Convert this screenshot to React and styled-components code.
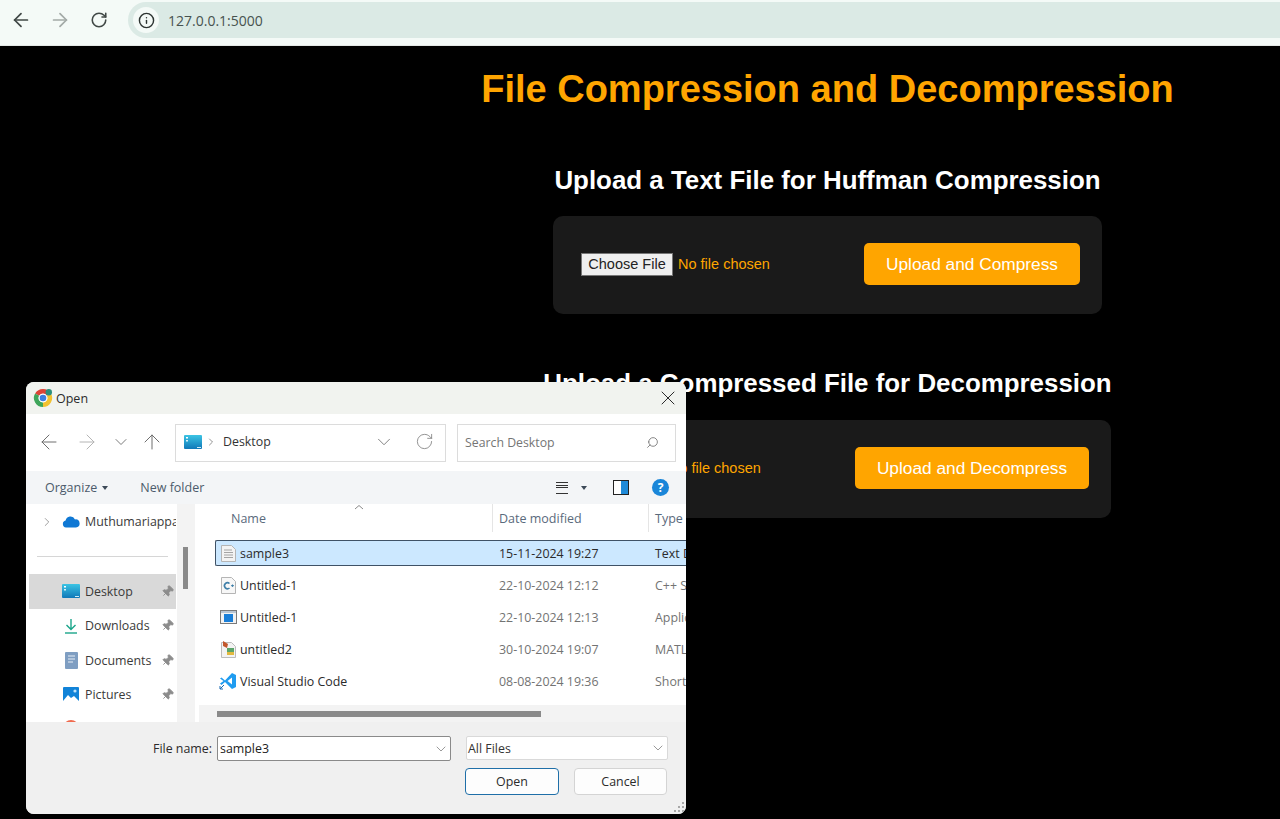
import React from 'react';
import styled, { createGlobalStyle } from 'styled-components';
import { ArrowLeft, ArrowRight, ArrowUp, ChevronDown, ChevronRight, Info, Pin, RotateCw, Search, X } from 'lucide-react';

const GlobalStyle = createGlobalStyle`
    html, body {
        margin: 0;
        padding: 0;
        background: #000;
    }
    body {
        font-family: "Liberation Sans", Arial, sans-serif;
    }
`;

const Page = styled.div`
    position: relative;
    width: 1280px;
    height: 819px;
    overflow: hidden;
    background: #000;
`;

/* browser chrome */
const BrowserBar = styled.div`
    height: 45px;
    display: flex;
    align-items: flex-start;
    background: #f4faf7;
    border-bottom: 1px solid #e3e8e5;
    box-sizing: content-box;
`;

const BrowserButton = styled.div`
    width: 39px;
    height: 40px;
    display: flex;
    align-items: center;
    justify-content: center;
    color: ${(p) => (p.$off ? '#a3aaa7' : '#404846')};
    &:first-child {
        margin-left: 1px;
    }
`;

const AddressBar = styled.div`
    margin-left: 10px;
    margin-top: 2px;
    flex: 1;
    height: 36px;
    display: flex;
    align-items: center;
    padding-left: 5px;
    gap: 9px;
    background: #dbeae5;
    border-radius: 18px 0 0 18px;
`;

const SiteInfo = styled.div`
    width: 26px;
    height: 26px;
    border-radius: 50%;
    background: #f4faf7;
    display: flex;
    align-items: center;
    justify-content: center;
    color: #2c3331;
`;

const Url = styled.span`
    font-family: "Open Sans", sans-serif;
    font-size: 14px;
    color: #47524f;
`;

/* the page itself */
const Main = styled.main`
    display: flex;
    flex-direction: column;
    align-items: center;
    padding: 22px 0 0 375px;
`;

const Title = styled.h1`
    margin: 0;
    font-size: 38px;
    line-height: 42px;
    font-weight: bold;
    color: #ffa500;
`;

const Section = styled.section`
    margin-top: ${(p) => p.$top}px;
    display: flex;
    flex-direction: column;
    align-items: center;
    gap: ${(p) => p.$gap}px;
`;

const Heading = styled.h2`
    margin: 0;
    font-size: 25.9px;
    line-height: 32px;
    font-weight: bold;
    color: #fff;
`;

const Card = styled.form`
    height: 98px;
    margin: 0;
    box-sizing: border-box;
    display: inline-flex;
    align-items: center;
    padding: 0 22px 2px 28px;
    background: #1a1a1a;
    border-radius: 10px;
`;

const FilePicker = styled.div`
    width: 283px;
    display: flex;
    align-items: center;
    gap: 5px;
    font-size: 14.5px;
    color: #ffa500;
`;

const ChooseButton = styled.span`
    width: 92px;
    height: 23px;
    box-sizing: border-box;
    display: flex;
    align-items: center;
    justify-content: center;
    background: #efefef;
    border: 1px solid #767676;
    color: #222;
`;

const SubmitButton = styled.span`
    height: 42px;
    padding: 0 22px;
    display: flex;
    align-items: center;
    background: #ffa500;
    border-radius: 5px;
    font-size: 17.3px;
    color: #fff;
`;

/* the native file dialog, floating above the page */
const Dialog = styled.div`
    position: absolute;
    left: 26px;
    top: 382px;
    width: 660px;
    height: 432px;
    display: flex;
    flex-direction: column;
    overflow: hidden;
    border-radius: 8px;
    background: #f0f0f0;
    font-family: "Open Sans", "Noto Sans", sans-serif;
    font-size: 12.4px;
    color: #2b2b2b;
`;

const TitleBar = styled.div`
    height: 32px;
    flex: none;
    display: flex;
    align-items: center;
    padding: 0 6px 0 7px;
    gap: 3px;
    background: #f1f3ef;
    font-size: 12.5px;
`;

const TitleText = styled.span`
    flex: 1;
`;

const NavRow = styled.div`
    height: 57px;
    flex: none;
    display: flex;
    align-items: center;
    padding-left: 4px;
    background: #fff;
`;

const NavButton = styled.div`
    width: ${(p) => p.$w}px;
    margin-top: -2px;
    display: flex;
    justify-content: center;
    color: ${(p) => (p.$off ? '#b4b4b4' : '#6e6e6e')};
`;

const PathBox = styled.div`
    margin-left: 7px;
    width: 271px;
    height: 38px;
    box-sizing: border-box;
    display: flex;
    align-items: center;
    padding: 0 0 2px 8px;
    gap: 3px;
    border: 1px solid #dcdcdc;
    color: #333;
`;

const PathText = styled.span`
    flex: 1;
    margin-left: 3px;
`;

const PathAction = styled.div`
    width: 41px;
    margin-left: -3px;
    display: flex;
    justify-content: center;
    color: #777;
`;

const SearchBox = styled.div`
    margin-left: 11px;
    width: 219px;
    height: 38px;
    box-sizing: border-box;
    display: flex;
    align-items: center;
    justify-content: space-between;
    padding: 0 16px 0 7px;
    border: 1px solid #dcdcdc;
    font-size: 12.3px;
    color: #757575;
`;

const ToolBar = styled.div`
    height: 33px;
    flex: none;
    display: flex;
    align-items: center;
    padding-left: 19px;
    background: #f3f5f7;
    font-size: 12.5px;
    color: #4c5b6b;
`;

const ToolLabel = styled.span`
    display: flex;
    align-items: center;
    gap: 5px;
    margin-right: ${(p) => p.$after || 0}px;
`;

const Caret = styled.i`
    width: 0;
    height: 0;
    border-left: 3.5px solid transparent;
    border-right: 3.5px solid transparent;
    border-top: 4px solid #3d4a58;
`;

const ToolIcons = styled.div`
    margin-left: auto;
    margin-right: 17px;
    display: flex;
    align-items: center;
`;

const ListLines = styled.div`
    width: 12px;
    height: 10px;
    border-top: 1px solid #333;
    border-bottom: 1px solid #333;
    margin-right: 13px;
    position: relative;
    &::after {
        content: '';
        position: absolute;
        left: 0;
        right: 0;
        top: 2px;
        height: 3px;
        border-top: 1px solid #333;
        border-bottom: 1px solid #333;
        box-sizing: border-box;
    }
`;

const PreviewPane = styled.div`
    width: 14px;
    height: 13px;
    margin: 0 23px 0 26px;
    border: 1px solid #222;
    background: linear-gradient(90deg, #fff 50%, #1f8ad8 50%);
`;

const HelpBadge = styled.div`
    width: 17px;
    height: 17px;
    border-radius: 50%;
    display: flex;
    align-items: center;
    justify-content: center;
    background: #1a86d9;
    color: #fff;
    font-size: 12px;
    font-weight: bold;
`;

const Body = styled.div`
    height: 218px;
    flex: none;
    display: flex;
    background: #fff;
`;

const Sidebar = styled.nav`
    width: 151px;
    flex: none;
    overflow: hidden;
    background: #fff;
    color: #3a3a3a;
`;

const SideItem = styled.div`
    height: ${(p) => p.$h || 34.5}px;
    margin: 0 1px 0 3px;
    display: flex;
    align-items: center;
    background: ${(p) => (p.$active ? '#d9d9d9' : 'transparent')};
`;

const SideChevron = styled.div`
    width: 32px;
    padding-left: 11px;
    box-sizing: border-box;
    display: flex;
    color: #777;
`;

const SideIcon = styled.div`
    width: 20px;
    margin-right: 4px;
    display: flex;
    justify-content: center;
`;

const SideLabel = styled.span`
    flex: 1;
    min-width: 0;
    white-space: nowrap;
    overflow: hidden;
`;

const PinMark = styled.div`
    width: 18px;
    display: flex;
    justify-content: center;
    color: #8c8c8c;
    svg {
        transform: rotate(45deg);
    }
`;

const SideDivider = styled.div`
    margin: 17px 9px 17px 11px;
    height: 1px;
    background: #d6d6d6;
`;

const SideRail = styled.div`
    width: 18px;
    flex: none;
    background: #f3f3f3;
    padding: 43px 0 0 6px;
    box-sizing: border-box;
`;

const RailThumb = styled.div`
    width: 5px;
    height: 42px;
    background: #8a8a8a;
`;

const FilePanel = styled.div`
    flex: 1;
    min-width: 0;
    display: flex;
    flex-direction: column;
`;

const FileArea = styled.div`
    flex: 1;
    min-height: 0;
`;

const HeaderRow = styled.div`
    height: 30px;
    display: grid;
    grid-template-columns: 298px 156px 1fr;
    padding-bottom: 2px;
    box-sizing: border-box;
    font-size: 12.5px;
    color: #5a6a7c;
`;

const HeaderCell = styled.div`
    position: relative;
    display: flex;
    align-items: center;
    padding-left: ${(p) => p.$pad}px;
    border-right: ${(p) => (p.$last ? 'none' : '1px solid #e5e5e5')};
`;

const SortMark = styled.svg`
    position: absolute;
    left: 159px;
    top: 0;
`;

const FileList = styled.div`
    margin: 6px 0 0 20px;
    display: flex;
    flex-direction: column;
    gap: 6px;
`;

const FileRow = styled.div`
    height: 26px;
    box-sizing: border-box;
    display: grid;
    grid-template-columns: 283px 156px 1fr;
    align-items: center;
    white-space: nowrap;
    overflow: hidden;
    background: ${(p) => (p.$selected ? '#cce8ff' : 'transparent')};
    border: 1px solid ${(p) => (p.$selected ? '#3f5266' : 'transparent')};
    border-right: none;
    border-radius: 2px 0 0 2px;
    color: ${(p) => (p.$selected ? '#2b2b2b' : '#737373')};
`;

const NameCell = styled.div`
    display: flex;
    align-items: center;
    color: #2b2b2b;
    margin-left: 4px;
`;

const FileIconSlot = styled.div`
    width: 16px;
    margin-right: 4px;
    display: flex;
    justify-content: center;
    svg {
        flex: none;
    }
`;

const HorizontalTrack = styled.div`
    height: 17px;
    flex: none;
    margin-left: 4px;
    padding: 6px 0 0 18px;
    box-sizing: border-box;
    background: #f3f3f3;
`;

const HorizontalThumb = styled.div`
    width: 324px;
    height: 6px;
    background: #8a8a8a;
`;

const Footer = styled.div`
    position: relative;
    flex: 1;
    padding: 14px 18px 0 0;
    display: flex;
    flex-direction: column;
    align-items: flex-end;
    background: #f0f0f0;
`;

const FooterRow = styled.div`
    display: flex;
    align-items: flex-start;
    gap: ${(p) => p.$gap}px;
    margin-top: ${(p) => p.$top || 0}px;
    margin-right: ${(p) => p.$right || 0}px;
`;

const FieldLabel = styled.span`
    line-height: 25px;
    margin-right: -10px;
`;

const Field = styled.div`
    width: ${(p) => p.$w}px;
    height: ${(p) => p.$h}px;
    box-sizing: border-box;
    display: flex;
    align-items: center;
    justify-content: space-between;
    padding: 0 1px 0 ${(p) => (p.$strong ? 2 : 1)}px;
    background: #fff;
    border: 1px solid ${(p) => (p.$strong ? '#8a8a8a' : '#d9d9d9')};
    border-radius: 2px;
    color: ${(p) => (p.$strong ? '#222' : '#333')};
`;

const DialogButton = styled.div`
    width: ${(p) => p.$w}px;
    height: 27px;
    box-sizing: border-box;
    display: flex;
    align-items: center;
    justify-content: center;
    background: #fdfdfd;
    border: 1px solid ${(p) => (p.$primary ? '#1f6fa8' : '#d4d4d4')};
    border-radius: 4px;
`;

const Grip = styled.svg`
    position: absolute;
    right: 1px;
    bottom: 1px;
`;

/* drawings */
const ChromeLogo = () => (
    <svg width="20" height="20" viewBox="0 0 20 20" fill="none" strokeWidth="4.6">
        <path d="M4.100 6.600a6.800 6.800 0 0 1 11.800 0" stroke="#dc4437" />
        <path d="M15.900 6.600A6.800 6.800 0 0 1 10 16.800" stroke="#f2c230" />
        <path d="M10 16.800A6.800 6.800 0 0 1 4.100 6.600" stroke="#3ea55a" />
        <circle cx="10" cy="10" r="4.300" fill="#fff" stroke="none" />
        <circle cx="10" cy="10" r="3.300" fill="#3d7fe0" stroke="none" />
        <circle cx="15.800" cy="4.200" r="3.200" fill="#2c8f7b" stroke="none" />
    </svg>
);

const DesktopIcon = () => (
    <svg width="18" height="14" viewBox="0 0 18 14">
        <defs>
            <linearGradient id="desk" x1="0" y1="0" x2="0" y2="1">
                <stop offset="0" stopColor="#3cc4e4" />
                <stop offset="1" stopColor="#0f78b8" />
            </linearGradient>
        </defs>
        <rect width="18" height="14" rx="1" fill="url(#desk)" />
        <rect x="2" y="2" width="2" height="1.5" fill="#fff" />
        <rect x="2" y="5" width="2" height="1.5" fill="#d8f2fa" />
        <rect x="13" y="12" width="4" height="1" fill="#cfe9f5" />
    </svg>
);

const CloudIcon = () => (
    <svg width="18" height="13" viewBox="0 0 18 13">
        <path d="M4 12.500A3.500 3.500 0 0 1 3.600 5.600 5 5 0 0 1 13 4.400a4 4 0 0 1 1 8.100z" fill="#0f78d4" />
    </svg>
);

const DownloadIcon = () => (
    <svg width="14" height="16" viewBox="0 0 14 16" fill="none" stroke="#1aa58a" strokeWidth="1.4">
        <path d="M7 1v10M2.500 7L7 11.500 11.500 7" />
        <path d="M1 15h12" />
    </svg>
);

const DocumentsIcon = () => (
    <svg width="13" height="17" viewBox="0 0 13 17">
        <rect width="13" height="17" rx="1" fill="#7f9ec2" />
        <path d="M3 4h7M3 7h7M3 10h5" stroke="#e8eef6" strokeWidth="1" />
    </svg>
);

const PicturesIcon = () => (
    <svg width="16" height="16" viewBox="0 0 16 16">
        <rect width="16" height="16" rx="1" fill="#1183d8" />
        <path d="M0 14l5-6 3 3 3-2 5 5v2H0z" fill="#fff" />
        <circle cx="12" cy="4" r="1.600" fill="#bfe3fa" />
    </svg>
);

const MusicIcon = () => (
    <svg width="16" height="16" viewBox="0 0 16 16">
        <circle cx="8" cy="8" r="8" fill="#ef6a4e" />
    </svg>
);

const TextFileIcon = () => (
    <svg width="15" height="17" viewBox="0 0 15 17">
        <path d="M.5.5h10l4 4v12H.5z" fill="#f3f3f3" stroke="#b5b5b5" />
        <path d="M3 5h8M3 7.500h9M3 10h9M3 12.500h9" stroke="#a4a4a4" />
    </svg>
);

const CppFileIcon = () => (
    <svg width="15" height="17" viewBox="0 0 15 17">
        <path d="M.5.5h10l4 4v12H.5z" fill="#f7f7f7" stroke="#b5b5b5" />
        <path d="M8.500 6.500a3 3 0 1 0 0 4.500" fill="none" stroke="#3f7fa8" strokeWidth="1.6" />
        <path d="M10 8.700h3M11.500 7.500v2.400" stroke="#3f7fa8" />
    </svg>
);

const AppFileIcon = () => (
    <svg width="17" height="14" viewBox="0 0 17 14">
        <rect x=".5" y=".5" width="16" height="13" fill="#f2f2f2" stroke="#7a7a7a" />
        <rect x="1" y="1" width="15" height="2" fill="#b9c6d3" />
        <rect x="4" y="4" width="9" height="8" fill="#1a7fd8" />
    </svg>
);

const MatlabFileIcon = () => (
    <svg width="15" height="18" viewBox="0 0 15 18">
        <path d="M.5 2.500h10l4 4v11H.5z" fill="#f3f3f3" stroke="#bcbcbc" />
        <path d="M2 1l5 3-1 4-4-2z" fill="#c2572c" />
        <rect x="6" y="8" width="7" height="4" fill="#5aa469" />
        <rect x="6" y="12" width="7" height="3" fill="#e2b93f" />
    </svg>
);

const VsCodeIcon = () => (
    <svg width="18" height="18" viewBox="0 0 18 18">
        <path d="M13 1l4 2v12l-4 2-7-7-3.500 3L1 11.500 4.500 9 1 6.500 2.500 5.500 6 8.500z" fill="#1f9cf0" />
        <path d="M13 5.500L8.500 9l4.500 3.500z" fill="#fff" />
        <path d="M1 17l4-4M1 17h3M1 17v-3" stroke="#1467b0" strokeWidth="1" fill="none" />
    </svg>
);

const sideItems = [
    { label: 'Desktop', icon: <DesktopIcon />, active: true },
    { label: 'Downloads', icon: <DownloadIcon /> },
    { label: 'Documents', icon: <DocumentsIcon /> },
    { label: 'Pictures', icon: <PicturesIcon /> },
    { label: '', icon: <MusicIcon />, height: 32 },
];

const files = [
    { name: 'sample3', date: '15-11-2024 19:27', type: 'Text Document', icon: <TextFileIcon />, selected: true },
    { name: 'Untitled-1', date: '22-10-2024 12:12', type: 'C++ Source', icon: <CppFileIcon /> },
    { name: 'Untitled-1', date: '22-10-2024 12:13', type: 'Application', icon: <AppFileIcon /> },
    { name: 'untitled2', date: '30-10-2024 19:07', type: 'MATLAB', icon: <MatlabFileIcon /> },
    { name: 'Visual Studio Code', date: '08-08-2024 19:36', type: 'Shortcut', icon: <VsCodeIcon /> },
];

const UploadCard = ({ action }) => (
    <Card>
        <FilePicker>
            <ChooseButton>Choose File</ChooseButton>
            No file chosen
        </FilePicker>
        <SubmitButton>{action}</SubmitButton>
    </Card>
);

const App = () => (
    <Page>
        <GlobalStyle />
        <BrowserBar>
            <BrowserButton><ArrowLeft size={22} strokeWidth={1.9} /></BrowserButton>
            <BrowserButton $off><ArrowRight size={22} strokeWidth={1.9} /></BrowserButton>
            <BrowserButton><RotateCw size={18} strokeWidth={2.1} /></BrowserButton>
            <AddressBar>
                <SiteInfo><Info size={17} strokeWidth={2} /></SiteInfo>
                <Url>127.0.0.1:5000</Url>
            </AddressBar>
        </BrowserBar>

        <Main>
            <Title>File Compression and Decompression</Title>
            <Section $top={54} $gap={20}>
                <Heading>Upload a Text File for Huffman Compression</Heading>
                <UploadCard action="Upload and Compress" />
            </Section>
            <Section $top={53} $gap={21}>
                <Heading>Upload a Compressed File for Decompression</Heading>
                <UploadCard action="Upload and Decompress" />
            </Section>
        </Main>

        <Dialog>
            <TitleBar>
                <ChromeLogo />
                <TitleText>Open</TitleText>
                <X size={24} strokeWidth={1} />
            </TitleBar>
            <NavRow>
                <NavButton $w={38}><ArrowLeft size={24} strokeWidth={1} /></NavButton>
                <NavButton $w={38} $off><ArrowRight size={24} strokeWidth={1} /></NavButton>
                <NavButton $w={30}><ChevronDown size={20} strokeWidth={1.1} /></NavButton>
                <NavButton $w={32}><ArrowUp size={24} strokeWidth={1} /></NavButton>
                <PathBox>
                    <DesktopIcon />
                    <ChevronRight size={12} strokeWidth={1.4} color="#666" />
                    <PathText>Desktop</PathText>
                    <PathAction><ChevronDown size={22} strokeWidth={1} /></PathAction>
                    <PathAction><RotateCw size={19} strokeWidth={1} /></PathAction>
                </PathBox>
                <SearchBox>
                    Search Desktop
                    <Search size={13} strokeWidth={1.6} style={{ transform: 'scaleX(-1)' }} />
                </SearchBox>
            </NavRow>
            <ToolBar>
                <ToolLabel $after={32}>Organize <Caret /></ToolLabel>
                <ToolLabel>New folder</ToolLabel>
                <ToolIcons>
                    <ListLines />
                    <Caret />
                    <PreviewPane />
                    <HelpBadge>?</HelpBadge>
                </ToolIcons>
            </ToolBar>
            <Body>
                <Sidebar>
                    <SideItem $h={35}>
                        <SideChevron><ChevronRight size={14} strokeWidth={1.2} /></SideChevron>
                        <SideIcon><CloudIcon /></SideIcon>
                        <SideLabel>Muthumariappa</SideLabel>
                    </SideItem>
                    <SideDivider />
                    {sideItems.map((item, index) => (
                        <SideItem key={index} $active={item.active} $h={item.height}>
                            <SideChevron />
                            <SideIcon>{item.icon}</SideIcon>
                            <SideLabel>{item.label}</SideLabel>
                            {item.label && <PinMark><Pin size={13} strokeWidth={1.6} fill="#8c8c8c" /></PinMark>}
                        </SideItem>
                    ))}
                </Sidebar>
                <SideRail><RailThumb /></SideRail>
                <FilePanel>
                    <FileArea>
                        <HeaderRow>
                            <HeaderCell $pad={36}>
                                Name
                                <SortMark width="10" height="6" viewBox="0 0 10 6" fill="none" stroke="#8a8a8a">
                                    <path d="M1 5l4-3.500L9 5" />
                                </SortMark>
                            </HeaderCell>
                            <HeaderCell $pad={6}>Date modified</HeaderCell>
                            <HeaderCell $pad={6} $last>Type</HeaderCell>
                        </HeaderRow>
                        <FileList>
                            {files.map((file, index) => (
                                <FileRow key={index} $selected={file.selected}>
                                    <NameCell>
                                        <FileIconSlot>{file.icon}</FileIconSlot>
                                        {file.name}
                                    </NameCell>
                                    <span>{file.date}</span>
                                    <span>{file.type}</span>
                                </FileRow>
                            ))}
                        </FileList>
                    </FileArea>
                    <HorizontalTrack><HorizontalThumb /></HorizontalTrack>
                </FilePanel>
            </Body>
            <Footer>
                <FooterRow $gap={15}>
                    <FieldLabel>File name:</FieldLabel>
                    <Field $w={234} $h={25} $strong>
                        sample3
                        <ChevronDown size={16} strokeWidth={1} color="#666" />
                    </Field>
                    <Field $w={202} $h={24}>
                        All Files
                        <ChevronDown size={16} strokeWidth={1} color="#666" />
                    </Field>
                </FooterRow>
                <FooterRow $gap={15} $top={7} $right={1}>
                    <DialogButton $w={94} $primary>Open</DialogButton>
                    <DialogButton $w={93}>Cancel</DialogButton>
                </FooterRow>
                <Grip width="12" height="12" viewBox="0 0 12 12" fill="#a8a8a8">
                    <rect x="9" y="1" width="2" height="2" />
                    <rect x="5" y="5" width="2" height="2" />
                    <rect x="9" y="5" width="2" height="2" />
                    <rect x="1" y="9" width="2" height="2" />
                    <rect x="5" y="9" width="2" height="2" />
                    <rect x="9" y="9" width="2" height="2" />
                </Grip>
            </Footer>
        </Dialog>
    </Page>
);

export default App;
